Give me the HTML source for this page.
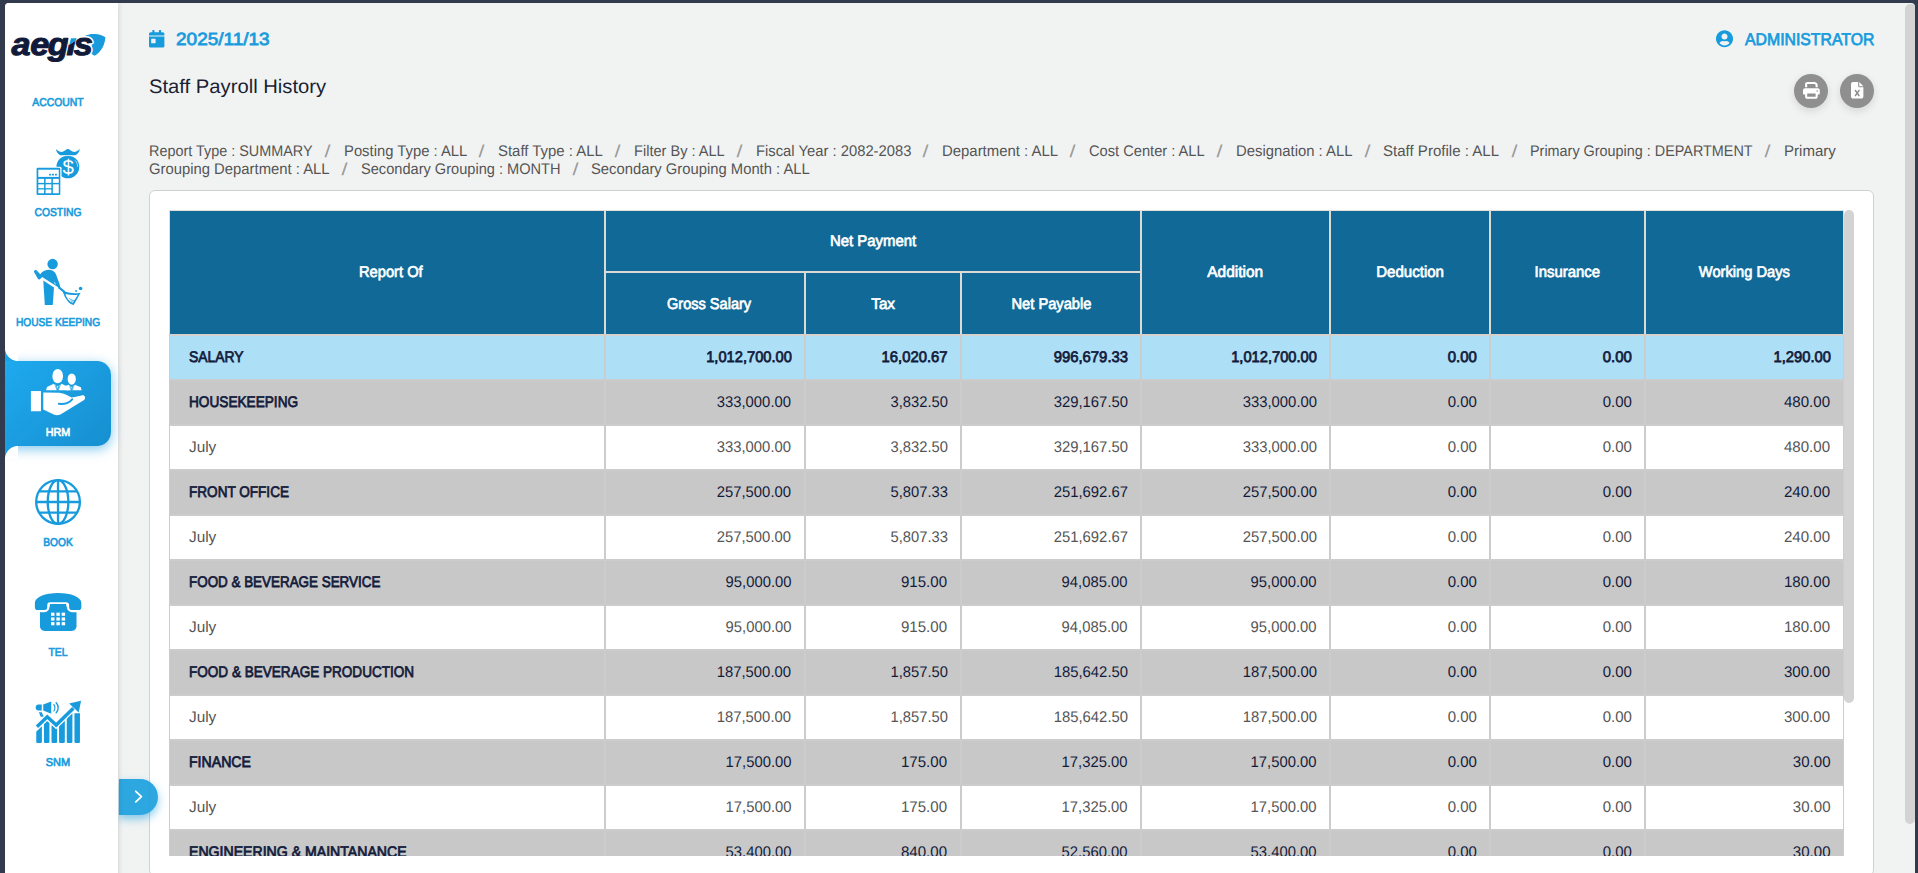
<!DOCTYPE html><html lang="en"><head><meta charset="utf-8"><title>Staff Payroll History</title><style>
*{box-sizing:border-box}
html,body{margin:0;padding:0}
body{width:1918px;height:873px;overflow:hidden;background:#323a4d;font-family:"Liberation Sans",sans-serif;position:relative;color:#555;text-rendering:geometricPrecision}
.app{position:absolute;left:5px;top:3px;width:1910px;height:880px;background:#f1f3f3;border-radius:4px 4px 0 0;overflow:hidden}
.abs{position:absolute;white-space:nowrap}
.side{position:absolute;left:0;top:0;width:113px;height:880px;background:#fff;box-shadow:1px 0 5px rgba(0,0,0,.13)}
.lbl{position:absolute;white-space:nowrap;font-size:11.4px;line-height:14px;color:#179bdd;-webkit-text-stroke:.65px #179bdd;transform:translateX(-50%)}
.lbl.on{color:#fff;-webkit-text-stroke:.65px #fff}
.tile{position:absolute;left:0;top:358px;width:106px;height:85px;border-radius:0 14px 14px 0;background:linear-gradient(135deg,#1ea9ee 0%,#168fd0 100%);box-shadow:0 3px 12px rgba(23,155,221,.55)}
.date{font-size:17.6px;color:#179bdd;-webkit-text-stroke:.75px #179bdd}
.adm{font-size:17px}
.title{font-size:19.6px;color:#1b1f33}
.crumb{font-size:15.4px;line-height:18px;color:#555}
.sep{color:#999}
.sep i{display:inline-block;font-style:normal;transform:translate(0.3px,0.6px) scale(1.4,1.13)}
.card{position:absolute;left:144px;top:187px;width:1725px;height:686px;background:#fff;border:1px solid #d0d0d0;border-radius:6px}
.scroll{position:absolute;left:20px;top:20px;width:1683px;height:644.5px;overflow:hidden}
table{border-collapse:separate;border-spacing:0;table-layout:fixed;width:1673px;font-size:15.4px}
td,th{padding:0;height:45px;border-top:2px solid #ccc;border-left:2px solid #ccc;overflow:hidden;white-space:nowrap}
td:first-child,th:first-child{border-left:0}
th{background:#106997;color:#fff;font-weight:normal;-webkit-text-stroke:.7px #fff;border-color:#ded9d5;text-align:center}
tr.h1 th{border-top:0;height:60px}
tr.h1 th[rowspan]{height:123px}
tr.h2 th{height:63px}
tr.h2 th:first-child{border-left:2px solid #ded9d5}
td{text-align:right;padding-right:12.5px;color:#555}
td:first-child{text-align:left;padding-left:19px;padding-right:0}
tr.tot td{background:#addff7;color:#131b3b;-webkit-text-stroke:.75px #131b3b;border-top-color:#d5d1ce}
tr.grp td{background:#c8c8c8;color:#131b3b}
tr.grp td:first-child{-webkit-text-stroke:.75px #131b3b}
tr.mon td{background:#fff}
td span{position:relative;top:0.9px}
th span{position:relative;top:1.3px}
tr.h2 th span{top:1px}
th[rowspan] span{top:0.5px}
th{font-size:15.6px}
.ln{position:absolute}
.vthumb{position:absolute;background:#d3d3d3;border-radius:5px}
.cc{position:absolute;left:0;width:13px;height:13px}
.btn{position:absolute;width:34px;height:34px;border-radius:50%;background:#8f8f8f;box-shadow:0 3px 8px rgba(0,0,0,.12)}
.tog{position:absolute;left:114px;top:776px;width:39px;height:36px;border-radius:0 18px 18px 0;background:rgba(30,160,222,.93);box-shadow:0 4px 9px rgba(23,155,221,.5)}
svg{position:absolute;overflow:visible}
</style></head><body>
<div class="app">
<svg style="left:144px;top:26.9px" width="15.4" height="17.6" viewBox="0 0 448 512"><path fill="#179bdd" d="M0 464c0 26.500 21.500 48 48 48h352c26.500 0 48-21.500 48-48V192H0v272zm64-192c0-8.800 7.200-16 16-16h96c8.800 0 16 7.200 16 16v96c0 8.800-7.200 16-16 16H80c-8.800 0-16-7.200-16-16v-96zM400 64h-48V16c0-8.800-7.200-16-16-16h-32c-8.800 0-16 7.200-16 16v48H160V16c0-8.800-7.200-16-16-16h-32c-8.800 0-16 7.200-16 16v48H48C21.500 64 0 85.500 0 112v48h448v-48c0-26.500-21.500-48-48-48z"/></svg>
<svg style="left:1710.8px;top:26.6px" width="17.05" height="17.6" viewBox="0 0 496 512"><path fill="#179bdd" d="M248 8C111 8 0 119 0 256s111 248 248 248 248-111 248-248S385 8 248 8zm0 96c48.600 0 88 39.400 88 88s-39.400 88-88 88-88-39.400-88-88 39.400-88 88-88zm0 344c-58.700 0-111.300-26.600-146.500-68.200 18.800-35.400 55.600-59.800 98.500-59.800 2.400 0 4.800.4 7.100 1.100 13 4.200 26.600 6.900 40.900 6.900 14.300 0 28-2.700 40.900-6.900 2.300-.7 4.700-1.100 7.100-1.100 42.900 0 79.700 24.400 98.500 59.800C359.300 421.400 306.700 448 248 448z"/></svg>

<div class="abs date" style="left:171.0px;top:25.5px"><span id="date" class="" style="display:inline-block;transform-origin:left center;transform:scaleX(1.0796)">2025/11/13</span></div>
<div class="abs date adm" style="left:1739.5px;top:27.2px"><span id="admin" class="" style="display:inline-block;transform-origin:left center;transform:scaleX(0.9299)">ADMINISTRATOR</span></div>
<div class="abs title" style="left:144.0px;top:73.0px"><span id="title" class="" style="display:inline-block;transform-origin:left center;transform:scaleX(1.0319)">Staff Payroll History</span></div>
<div class="abs crumb" style="left:144.0px;top:140.0px"><span id="t1" class="" style="display:inline-block;transform-origin:left center;transform:scaleX(0.9359)">Report Type : SUMMARY</span></div>
<div class="abs crumb sep" style="left:320.0px;top:140.0px"><i>/</i></div>
<div class="abs crumb" style="left:338.6px;top:140.0px"><span id="t2" class="" style="display:inline-block;transform-origin:left center;transform:scaleX(0.9626)">Posting Type : ALL</span></div>
<div class="abs crumb sep" style="left:474.3px;top:140.0px"><i>/</i></div>
<div class="abs crumb" style="left:492.9px;top:140.0px"><span id="t3" class="" style="display:inline-block;transform-origin:left center;transform:scaleX(0.9689)">Staff Type : ALL</span></div>
<div class="abs crumb sep" style="left:610.1px;top:140.0px"><i>/</i></div>
<div class="abs crumb" style="left:628.7px;top:140.0px"><span id="t4" class="" style="display:inline-block;transform-origin:left center;transform:scaleX(0.9468)">Filter By : ALL</span></div>
<div class="abs crumb sep" style="left:731.8px;top:140.0px"><i>/</i></div>
<div class="abs crumb" style="left:750.5px;top:140.0px"><span id="t5" class="" style="display:inline-block;transform-origin:left center;transform:scaleX(0.9612)">Fiscal Year : 2082-2083</span></div>
<div class="abs crumb sep" style="left:918.3px;top:140.0px"><i>/</i></div>
<div class="abs crumb" style="left:936.9px;top:140.0px"><span id="t6" class="" style="display:inline-block;transform-origin:left center;transform:scaleX(0.9689)">Department : ALL</span></div>
<div class="abs crumb sep" style="left:1065.4px;top:140.0px"><i>/</i></div>
<div class="abs crumb" style="left:1084.0px;top:140.0px"><span id="t7" class="" style="display:inline-block;transform-origin:left center;transform:scaleX(0.9520)">Cost Center : ALL</span></div>
<div class="abs crumb sep" style="left:1212.1px;top:140.0px"><i>/</i></div>
<div class="abs crumb" style="left:1230.7px;top:140.0px"><span id="t8" class="" style="display:inline-block;transform-origin:left center;transform:scaleX(0.9652)">Designation : ALL</span></div>
<div class="abs crumb sep" style="left:1359.6px;top:140.0px"><i>/</i></div>
<div class="abs crumb" style="left:1378.2px;top:140.0px"><span id="t9" class="" style="display:inline-block;transform-origin:left center;transform:scaleX(0.9778)">Staff Profile : ALL</span></div>
<div class="abs crumb sep" style="left:1506.7px;top:140.0px"><i>/</i></div>
<div class="abs crumb" style="left:1525.3px;top:140.0px"><span id="t10" class="" style="display:inline-block;transform-origin:left center;transform:scaleX(0.9353)">Primary Grouping : DEPARTMENT</span></div>
<div class="abs crumb sep" style="left:1760.4px;top:140.0px"><i>/</i></div>
<div class="abs crumb" style="left:1779.0px;top:140.0px"><span id="t11" class="" style="display:inline-block;transform-origin:left center;transform:scaleX(0.9774)">Primary</span></div>
<div class="abs crumb" style="left:144.0px;top:158.0px"><span id="t12" class="" style="display:inline-block;transform-origin:left center;transform:scaleX(0.9635)">Grouping Department : ALL</span></div>
<div class="abs crumb sep" style="left:337.0px;top:158.0px"><i>/</i></div>
<div class="abs crumb" style="left:355.6px;top:158.0px"><span id="t13" class="" style="display:inline-block;transform-origin:left center;transform:scaleX(0.9485)">Secondary Grouping : MONTH</span></div>
<div class="abs crumb sep" style="left:567.6px;top:158.0px"><i>/</i></div>
<div class="abs crumb" style="left:586.2px;top:158.0px"><span id="t14" class="" style="display:inline-block;transform-origin:left center;transform:scaleX(0.9614)">Secondary Grouping Month : ALL</span></div>
<div class="btn" style="left:1789px;top:71px"><svg style="left:8.6px;top:8px" width="16.8" height="16.8" viewBox="0 0 512 512"><path fill="#fff" d="M128 0C92.700 0 64 28.700 64 64v96h64V64H354.700L384 93.300V160h64V93.300c0-17-6.700-33.300-18.700-45.300L400 18.700C388 6.700 371.700 0 354.700 0H128zM384 352v32 64H128V384 368 352H384zm64 32h32c17.700 0 32-14.300 32-32V256c0-35.300-28.700-64-64-64H64c-35.300 0-64 28.700-64 64v96c0 17.700 14.300 32 32 32H64v64c0 35.300 28.700 64 64 64H384c35.300 0 64-28.700 64-64V384zM432 248a24 24 0 1 1 0 48 24 24 0 1 1 0-48z"/></svg>
</div>
<div class="btn" style="left:1835px;top:71px"><svg style="left:10.8px;top:8px" width="12.4" height="16.5" viewBox="0 0 384 512"><path fill="#fff" d="M64 0C28.700 0 0 28.700 0 64V448c0 35.300 28.700 64 64 64H320c35.300 0 64-28.700 64-64V160H256c-17.700 0-32-14.300-32-32V0H64zM256 0V128H384L256 0zM155.700 250.200L192 302.100l36.300-51.900c7.600-10.900 22.600-13.500 33.400-5.900s13.500 22.600 5.900 33.400L221.300 344l46.400 66.200c7.600 10.900 5 25.800-5.900 33.400s-25.800 5-33.400-5.900L192 385.800l-36.300 51.900c-7.600 10.900-22.600 13.500-33.400 5.900s-13.500-22.600-5.900-33.400L162.700 344l-46.400-66.200c-7.600-10.900-5-25.800 5.900-33.400s25.800-5 33.400 5.900z"/></svg>
</div>
<div class="card"><div class="scroll"><table>
<colgroup><col style="width:434px"><col style="width:200px"><col style="width:156px"><col style="width:180px"><col style="width:189px"><col style="width:160px"><col style="width:155px"><col style="width:199px"></colgroup>
<thead><tr class="h1"><th rowspan="2"><span id="t15" class="" style="left:3.8px;position:relative;display:inline-block;transform-origin:center center;transform:scaleX(0.9435)">Report Of</span></th><th colspan="3"><span id="t16" class="" style="display:inline-block;transform-origin:center center;transform:scaleX(0.9553)">Net Payment</span></th><th rowspan="2"><span id="t17" class="" style="display:inline-block;transform-origin:center center;transform:scaleX(0.9891)">Addition</span></th><th rowspan="2"><span id="t18" class="" style="display:inline-block;transform-origin:center center;transform:scaleX(0.9651)">Deduction</span></th><th rowspan="2"><span id="t19" class="" style="display:inline-block;transform-origin:center center;transform:scaleX(0.9552)">Insurance</span></th><th rowspan="2"><span id="t20" class="" style="display:inline-block;transform-origin:center center;transform:scaleX(0.9416)">Working Days</span></th></tr>
<tr class="h2"><th ><span id="t21" class="" style="left:3.7px;position:relative;display:inline-block;transform-origin:center center;transform:scaleX(0.9331)">Gross Salary</span></th><th ><span id="t22" class="" style="display:inline-block;transform-origin:center center;transform:scaleX(0.9777)">Tax</span></th><th ><span id="t23" class="" style="display:inline-block;transform-origin:center center;transform:scaleX(0.9404)">Net Payable</span></th></tr></thead><tbody>
<tr class="tot"><td><span id="t24" class="" style="display:inline-block;transform-origin:left center;transform:scaleX(0.9029)">SALARY</span></td><td><span id="t25" class="" style="display:inline-block;transform-origin:right center;transform:scaleX(0.9539)">1,012,700.00</span></td><td><span id="t26" class="" style="display:inline-block;transform-origin:right center;transform:scaleX(0.9625)">16,020.67</span></td><td><span id="t27" class="" style="display:inline-block;transform-origin:right center;transform:scaleX(0.9652)">996,679.33</span></td><td><span id="t28" class="" style="display:inline-block;transform-origin:right center;transform:scaleX(0.9539)">1,012,700.00</span></td><td><span id="t29" class="" style="display:inline-block;transform-origin:right center;transform:scaleX(0.9759)">0.00</span></td><td><span id="t30" class="" style="display:inline-block;transform-origin:right center;transform:scaleX(0.9759)">0.00</span></td><td><span id="t31" class="" style="display:inline-block;transform-origin:right center;transform:scaleX(0.9594)">1,290.00</span></td></tr>
<tr class="grp"><td><span id="t32" class="" style="display:inline-block;transform-origin:left center;transform:scaleX(0.8859)">HOUSEKEEPING</span></td><td><span id="t33" class="" style="display:inline-block;transform-origin:right center;transform:scaleX(0.9652)">333,000.00</span></td><td><span id="t34" class="" style="display:inline-block;transform-origin:right center;transform:scaleX(0.9594)">3,832.50</span></td><td><span id="t35" class="" style="display:inline-block;transform-origin:right center;transform:scaleX(0.9652)">329,167.50</span></td><td><span id="t36" class="" style="display:inline-block;transform-origin:right center;transform:scaleX(0.9652)">333,000.00</span></td><td><span id="t37" class="" style="display:inline-block;transform-origin:right center;transform:scaleX(0.9759)">0.00</span></td><td><span id="t38" class="" style="display:inline-block;transform-origin:right center;transform:scaleX(0.9759)">0.00</span></td><td><span id="t39" class="" style="display:inline-block;transform-origin:right center;transform:scaleX(0.9794)">480.00</span></td></tr>
<tr class="mon"><td><span id="t40" class="" style="display:inline-block;transform-origin:left center;transform:scaleX(0.9969)">July</span></td><td><span id="t41" class="" style="display:inline-block;transform-origin:right center;transform:scaleX(0.9652)">333,000.00</span></td><td><span id="t42" class="" style="display:inline-block;transform-origin:right center;transform:scaleX(0.9594)">3,832.50</span></td><td><span id="t43" class="" style="display:inline-block;transform-origin:right center;transform:scaleX(0.9652)">329,167.50</span></td><td><span id="t44" class="" style="display:inline-block;transform-origin:right center;transform:scaleX(0.9652)">333,000.00</span></td><td><span id="t45" class="" style="display:inline-block;transform-origin:right center;transform:scaleX(0.9759)">0.00</span></td><td><span id="t46" class="" style="display:inline-block;transform-origin:right center;transform:scaleX(0.9759)">0.00</span></td><td><span id="t47" class="" style="display:inline-block;transform-origin:right center;transform:scaleX(0.9794)">480.00</span></td></tr>
<tr class="grp"><td><span id="t48" class="" style="display:inline-block;transform-origin:left center;transform:scaleX(0.8815)">FRONT OFFICE</span></td><td><span id="t49" class="" style="display:inline-block;transform-origin:right center;transform:scaleX(0.9652)">257,500.00</span></td><td><span id="t50" class="" style="display:inline-block;transform-origin:right center;transform:scaleX(0.9594)">5,807.33</span></td><td><span id="t51" class="" style="display:inline-block;transform-origin:right center;transform:scaleX(0.9652)">251,692.67</span></td><td><span id="t52" class="" style="display:inline-block;transform-origin:right center;transform:scaleX(0.9652)">257,500.00</span></td><td><span id="t53" class="" style="display:inline-block;transform-origin:right center;transform:scaleX(0.9759)">0.00</span></td><td><span id="t54" class="" style="display:inline-block;transform-origin:right center;transform:scaleX(0.9759)">0.00</span></td><td><span id="t55" class="" style="display:inline-block;transform-origin:right center;transform:scaleX(0.9794)">240.00</span></td></tr>
<tr class="mon"><td><span id="t56" class="" style="display:inline-block;transform-origin:left center;transform:scaleX(0.9969)">July</span></td><td><span id="t57" class="" style="display:inline-block;transform-origin:right center;transform:scaleX(0.9652)">257,500.00</span></td><td><span id="t58" class="" style="display:inline-block;transform-origin:right center;transform:scaleX(0.9594)">5,807.33</span></td><td><span id="t59" class="" style="display:inline-block;transform-origin:right center;transform:scaleX(0.9652)">251,692.67</span></td><td><span id="t60" class="" style="display:inline-block;transform-origin:right center;transform:scaleX(0.9652)">257,500.00</span></td><td><span id="t61" class="" style="display:inline-block;transform-origin:right center;transform:scaleX(0.9759)">0.00</span></td><td><span id="t62" class="" style="display:inline-block;transform-origin:right center;transform:scaleX(0.9759)">0.00</span></td><td><span id="t63" class="" style="display:inline-block;transform-origin:right center;transform:scaleX(0.9794)">240.00</span></td></tr>
<tr class="grp"><td><span id="t64" class="" style="display:inline-block;transform-origin:left center;transform:scaleX(0.8717)">FOOD &amp; BEVERAGE SERVICE</span></td><td><span id="t65" class="" style="display:inline-block;transform-origin:right center;transform:scaleX(0.9625)">95,000.00</span></td><td><span id="t66" class="" style="display:inline-block;transform-origin:right center;transform:scaleX(0.9794)">915.00</span></td><td><span id="t67" class="" style="display:inline-block;transform-origin:right center;transform:scaleX(0.9625)">94,085.00</span></td><td><span id="t68" class="" style="display:inline-block;transform-origin:right center;transform:scaleX(0.9625)">95,000.00</span></td><td><span id="t69" class="" style="display:inline-block;transform-origin:right center;transform:scaleX(0.9759)">0.00</span></td><td><span id="t70" class="" style="display:inline-block;transform-origin:right center;transform:scaleX(0.9759)">0.00</span></td><td><span id="t71" class="" style="display:inline-block;transform-origin:right center;transform:scaleX(0.9794)">180.00</span></td></tr>
<tr class="mon"><td><span id="t72" class="" style="display:inline-block;transform-origin:left center;transform:scaleX(0.9969)">July</span></td><td><span id="t73" class="" style="display:inline-block;transform-origin:right center;transform:scaleX(0.9625)">95,000.00</span></td><td><span id="t74" class="" style="display:inline-block;transform-origin:right center;transform:scaleX(0.9794)">915.00</span></td><td><span id="t75" class="" style="display:inline-block;transform-origin:right center;transform:scaleX(0.9625)">94,085.00</span></td><td><span id="t76" class="" style="display:inline-block;transform-origin:right center;transform:scaleX(0.9625)">95,000.00</span></td><td><span id="t77" class="" style="display:inline-block;transform-origin:right center;transform:scaleX(0.9759)">0.00</span></td><td><span id="t78" class="" style="display:inline-block;transform-origin:right center;transform:scaleX(0.9759)">0.00</span></td><td><span id="t79" class="" style="display:inline-block;transform-origin:right center;transform:scaleX(0.9794)">180.00</span></td></tr>
<tr class="grp"><td><span id="t80" class="" style="display:inline-block;transform-origin:left center;transform:scaleX(0.8803)">FOOD &amp; BEVERAGE PRODUCTION</span></td><td><span id="t81" class="" style="display:inline-block;transform-origin:right center;transform:scaleX(0.9652)">187,500.00</span></td><td><span id="t82" class="" style="display:inline-block;transform-origin:right center;transform:scaleX(0.9594)">1,857.50</span></td><td><span id="t83" class="" style="display:inline-block;transform-origin:right center;transform:scaleX(0.9652)">185,642.50</span></td><td><span id="t84" class="" style="display:inline-block;transform-origin:right center;transform:scaleX(0.9652)">187,500.00</span></td><td><span id="t85" class="" style="display:inline-block;transform-origin:right center;transform:scaleX(0.9759)">0.00</span></td><td><span id="t86" class="" style="display:inline-block;transform-origin:right center;transform:scaleX(0.9759)">0.00</span></td><td><span id="t87" class="" style="display:inline-block;transform-origin:right center;transform:scaleX(0.9794)">300.00</span></td></tr>
<tr class="mon"><td><span id="t88" class="" style="display:inline-block;transform-origin:left center;transform:scaleX(0.9969)">July</span></td><td><span id="t89" class="" style="display:inline-block;transform-origin:right center;transform:scaleX(0.9652)">187,500.00</span></td><td><span id="t90" class="" style="display:inline-block;transform-origin:right center;transform:scaleX(0.9594)">1,857.50</span></td><td><span id="t91" class="" style="display:inline-block;transform-origin:right center;transform:scaleX(0.9652)">185,642.50</span></td><td><span id="t92" class="" style="display:inline-block;transform-origin:right center;transform:scaleX(0.9652)">187,500.00</span></td><td><span id="t93" class="" style="display:inline-block;transform-origin:right center;transform:scaleX(0.9759)">0.00</span></td><td><span id="t94" class="" style="display:inline-block;transform-origin:right center;transform:scaleX(0.9759)">0.00</span></td><td><span id="t95" class="" style="display:inline-block;transform-origin:right center;transform:scaleX(0.9794)">300.00</span></td></tr>
<tr class="grp"><td><span id="t96" class="" style="display:inline-block;transform-origin:left center;transform:scaleX(0.9173)">FINANCE</span></td><td><span id="t97" class="" style="display:inline-block;transform-origin:right center;transform:scaleX(0.9625)">17,500.00</span></td><td><span id="t98" class="" style="display:inline-block;transform-origin:right center;transform:scaleX(0.9794)">175.00</span></td><td><span id="t99" class="" style="display:inline-block;transform-origin:right center;transform:scaleX(0.9625)">17,325.00</span></td><td><span id="t100" class="" style="display:inline-block;transform-origin:right center;transform:scaleX(0.9625)">17,500.00</span></td><td><span id="t101" class="" style="display:inline-block;transform-origin:right center;transform:scaleX(0.9759)">0.00</span></td><td><span id="t102" class="" style="display:inline-block;transform-origin:right center;transform:scaleX(0.9759)">0.00</span></td><td><span id="t103" class="" style="display:inline-block;transform-origin:right center;transform:scaleX(0.9782)">30.00</span></td></tr>
<tr class="mon"><td><span id="t104" class="" style="display:inline-block;transform-origin:left center;transform:scaleX(0.9969)">July</span></td><td><span id="t105" class="" style="display:inline-block;transform-origin:right center;transform:scaleX(0.9625)">17,500.00</span></td><td><span id="t106" class="" style="display:inline-block;transform-origin:right center;transform:scaleX(0.9794)">175.00</span></td><td><span id="t107" class="" style="display:inline-block;transform-origin:right center;transform:scaleX(0.9625)">17,325.00</span></td><td><span id="t108" class="" style="display:inline-block;transform-origin:right center;transform:scaleX(0.9625)">17,500.00</span></td><td><span id="t109" class="" style="display:inline-block;transform-origin:right center;transform:scaleX(0.9759)">0.00</span></td><td><span id="t110" class="" style="display:inline-block;transform-origin:right center;transform:scaleX(0.9759)">0.00</span></td><td><span id="t111" class="" style="display:inline-block;transform-origin:right center;transform:scaleX(0.9782)">30.00</span></td></tr>
<tr class="grp"><td><span id="t112" class="" style="display:inline-block;transform-origin:left center;transform:scaleX(0.9165)">ENGINEERING &amp; MAINTANANCE</span></td><td><span id="t113" class="" style="display:inline-block;transform-origin:right center;transform:scaleX(0.9625)">53,400.00</span></td><td><span id="t114" class="" style="display:inline-block;transform-origin:right center;transform:scaleX(0.9794)">840.00</span></td><td><span id="t115" class="" style="display:inline-block;transform-origin:right center;transform:scaleX(0.9625)">52,560.00</span></td><td><span id="t116" class="" style="display:inline-block;transform-origin:right center;transform:scaleX(0.9625)">53,400.00</span></td><td><span id="t117" class="" style="display:inline-block;transform-origin:right center;transform:scaleX(0.9759)">0.00</span></td><td><span id="t118" class="" style="display:inline-block;transform-origin:right center;transform:scaleX(0.9759)">0.00</span></td><td><span id="t119" class="" style="display:inline-block;transform-origin:right center;transform:scaleX(0.9782)">30.00</span></td></tr>
<tr class="mon"><td><span id="t120" class="" style="display:inline-block;transform-origin:left center;transform:scaleX(0.9969)">July</span></td><td><span id="t121" class="" style="display:inline-block;transform-origin:right center;transform:scaleX(0.9625)">53,400.00</span></td><td><span id="t122" class="" style="display:inline-block;transform-origin:right center;transform:scaleX(0.9794)">840.00</span></td><td><span id="t123" class="" style="display:inline-block;transform-origin:right center;transform:scaleX(0.9625)">52,560.00</span></td><td><span id="t124" class="" style="display:inline-block;transform-origin:right center;transform:scaleX(0.9625)">53,400.00</span></td><td><span id="t125" class="" style="display:inline-block;transform-origin:right center;transform:scaleX(0.9759)">0.00</span></td><td><span id="t126" class="" style="display:inline-block;transform-origin:right center;transform:scaleX(0.9759)">0.00</span></td><td><span id="t127" class="" style="display:inline-block;transform-origin:right center;transform:scaleX(0.9782)">30.00</span></td></tr>
</tbody></table></div>
<div class="vthumb" style="left:1694.2px;top:19px;width:9.7px;height:493px"></div>
<div class="ln" style="left:19px;top:19px;width:1px;height:645.5px;background:linear-gradient(#e4deda 0,#e4deda 124px,#ccc 124px)"></div>
<div class="ln" style="left:19px;top:19px;width:1675px;height:1px;background:#e4deda"></div>
<div class="ln" style="left:1693px;top:19px;width:1px;height:645.5px;background:linear-gradient(#e4deda 0,#e4deda 124px,#ccc 124px)"></div>
</div>
<div class="vthumb" style="left:1900.3px;top:0.5px;width:9.7px;height:820px;border-radius:5px 3px 5px 5px"></div>
<div class="tog"><svg style="left:0;top:0" width="39" height="36" viewBox="0 0 39 36"><path d="M16.8 12.3 L22.4 17.6 L16.8 22.9" fill="none" stroke="#fff" stroke-width="1.8" stroke-linecap="round" stroke-linejoin="round"/></svg>
</div>
<div class="side">
<div class="tile"></div><div class="cc" style="top:345px;background:radial-gradient(circle at 100% 0,#fff 12.6px,#15a4ec 13.4px)"></div><div class="cc" style="top:443px;background:radial-gradient(circle at 100% 100%,#fff 12.6px,#17a0e6 13.4px)"></div>
<svg style="left:-5.0px;top:-3.0px" width="160" height="73" viewBox="0 0 1913 873">
<path fill="#179bdd" d="M1007,435 C1050,410 1090,405 1137,406 C1185,408 1225,425 1260,444 C1255,530 1215,615 1130,668 L1087,641 C1100,610 1104,575 1098,545 C1094,515 1080,470 1007,435 Z"/>
<g font-family="'Liberation Sans',sans-serif" font-weight="bold" font-style="italic" font-size="377" stroke-linejoin="round">
<text transform="scale(1.09,1)" x="125.7 333.0 524.8 728.4 810.1" y="663" fill="#fff" stroke="#fff" stroke-width="46">aegis</text>
<text transform="scale(1.09,1)" x="125.7 333.0 524.8 728.4 810.1" y="663" fill="#111a3a" stroke="#111a3a" stroke-width="13">aegis</text>
</g>
<path fill="#fff" d="M826,330 L960,330 L960,450 L918,450 L909,481 L828,534 L818,534 Z"/>
<path fill="#179bdd" d="M849,457 L916,457 L909,481 L828,534 Z"/>
</svg>
<svg style="left:23.0px;top:137.0px" width="60" height="60" viewBox="0 0 873 873">
<path fill="#179bdd" d="M405,130 C440,165 480,180 505,172 C535,160 555,130 580,130 C605,130 625,160 655,172 C680,180 720,165 755,130 C745,175 720,205 690,222 L470,222 C440,205 415,175 405,130 Z"/>
<circle cx="580" cy="392" r="166" fill="#179bdd"/>
<path d="M455,262 C520,215 640,215 700,262" fill="none" stroke="#fff" stroke-width="9"/>
<path d="M690,300 C712,325 722,355 722,385" fill="none" stroke="#fff" stroke-width="9" stroke-linecap="round"/>
<text x="585" y="490" text-anchor="middle" font-family="'Liberation Sans',sans-serif" font-size="300" fill="#fff">$</text>
<rect x="108" y="388" width="380" height="430" rx="22" fill="#fff"/>
<rect x="125" y="405" width="345" height="395" rx="16" fill="#179bdd"/>
<rect x="150" y="432" width="298" height="105" fill="#fff"/>
<rect x="308" y="492" width="28" height="24" fill="#179bdd"/><rect x="350" y="492" width="28" height="24" fill="#179bdd"/><rect x="392" y="492" width="28" height="24" fill="#179bdd"/>
<rect x="150" y="566" width="84" height="58" fill="#fff"/><rect x="256" y="566" width="84" height="58" fill="#fff"/><rect x="362" y="566" width="86" height="58" fill="#fff"/>
<rect x="150" y="645" width="84" height="56" fill="#fff"/><rect x="256" y="645" width="84" height="56" fill="#fff"/><rect x="362" y="645" width="86" height="130" fill="#fff"/>
<rect x="150" y="720" width="84" height="55" fill="#fff"/><rect x="256" y="720" width="84" height="55" fill="#fff"/>
</svg>
<svg style="left:23.0px;top:247.0px" width="60" height="60" viewBox="0 0 873 873">
<circle cx="358" cy="205" r="76" fill="#179bdd"/>
<path fill="#179bdd" d="M90,322 C80,302 100,282 124,294 L178,352 C215,302 260,288 310,288 C360,288 395,320 410,360 L462,505 C468,525 470,545 468,560 L205,392 L182,420 C170,436 150,432 142,416 Z"/>
<path fill="#179bdd" d="M222,444 L378,546 L360,800 L245,800 Z"/>
<path d="M452,548 L522,602" stroke="#179bdd" stroke-width="30" fill="none" stroke-linecap="round"/>
<path fill="#179bdd" d="M500,585 C570,625 680,640 765,622 L665,800 C600,790 540,720 500,585 Z"/>
<path fill="#fff" d="M545,640 C600,655 670,660 725,650 L650,770 C600,750 560,700 545,640 Z"/>
<path d="M600,705 C625,725 650,735 680,738" stroke="#179bdd" stroke-width="12" fill="none"/>
<path d="M620,735 C635,750 650,758 668,762" stroke="#179bdd" stroke-width="10" fill="none"/>
<circle cx="765" cy="560" r="26" fill="#179bdd"/><circle cx="700" cy="597" r="14" fill="#179bdd"/>
<path d="M385,462 L392,495 L405,495" stroke="#fff" stroke-width="8" fill="none"/>
</svg>
<svg style="left:-5.0px;top:342.0px" width="130" height="120" viewBox="0 0 946 873">
<g fill="#fff">
<rect x="225" y="335" width="73" height="147"/>
<path d="M315,345 L430,348 C470,352 500,372 520,382 C555,380 585,368 600,366 C620,366 626,386 612,400 L440,505 C425,512 405,512 395,508 L315,470 Z"/>
<ellipse cx="420" cy="226" rx="39" ry="52"/>
<path d="M335,330 L342,305 L392,282 L420,300 L448,282 L498,305 L505,330 Z"/>
<ellipse cx="522" cy="248" rx="30" ry="41"/>
<path d="M478,330 L470,300 L500,290 L522,305 L545,290 L588,308 L594,330 Z"/>
</g>
<path d="M428,428 C470,432 505,420 525,395" stroke="#1a9de2" stroke-width="14" fill="none" stroke-linecap="round"/>
<path d="M410,292 L420,330 L430,292" stroke="#1a9de2" stroke-width="7" fill="none"/>
<path d="M398,284 L416,330 M442,284 L424,330" stroke="#1a9de2" stroke-width="5" fill="none"/>
<path d="M514,298 L522,330 L530,298" stroke="#1a9de2" stroke-width="6" fill="none"/>
<path d="M505,292 L518,330 M540,292 L527,330" stroke="#1a9de2" stroke-width="4" fill="none"/>
</svg>
<svg style="left:23.0px;top:467.0px" width="60" height="60" viewBox="0 0 873 873">
<g fill="none" stroke="#179bdd" stroke-width="34">
<circle cx="437" cy="465" r="318"/>
<ellipse cx="437" cy="465" rx="150" ry="318"/>
<path d="M437,147 V783 M119,465 H755 M165,310 H709 M165,620 H709"/>
</g>
</svg>
<svg style="left:23.0px;top:577.0px" width="60" height="60" viewBox="0 0 873 873">
<path fill="#179bdd" d="M100,335 C100,250 250,190 438,190 C626,190 776,250 776,335 L776,395 C776,420 760,437 740,437 L632,437 C610,437 598,420 598,398 L598,365 C598,340 585,322 555,322 L320,322 C292,322 280,340 280,365 L280,398 C280,420 268,437 245,437 L136,437 C116,437 100,420 100,395 Z"/>
<path fill="#179bdd" d="M322,350 L552,350 L566,400 C572,440 600,468 640,468 L706,468 L706,670 C706,712 676,742 634,742 L246,742 C204,742 174,712 174,670 L174,468 L240,468 C280,468 306,440 312,400 Z"/>
<g fill="#fff">
<rect x="335" y="475" width="50" height="46"/><rect x="413" y="475" width="50" height="46"/><rect x="490" y="475" width="50" height="46"/>
<rect x="335" y="545" width="50" height="46"/><rect x="413" y="545" width="50" height="46"/><rect x="490" y="545" width="50" height="46"/>
<rect x="335" y="613" width="50" height="46"/><rect x="413" y="613" width="50" height="46"/><rect x="490" y="613" width="50" height="46"/>
</g>
</svg>
<svg style="left:23.0px;top:687.0px" width="60" height="60" viewBox="0 0 873 873"><path fill="#179bdd" d="M120,752 L120,607 L130,597 L140,587 L151,577 L161,567 L171,557 L182,547 L192,537 L202,527 L202,752 Q202,772 184,772 L138,772 Q120,772 120,752 Z"/><path fill="#179bdd" d="M232,752 L232,498 L242,489 L252,479 L262,469 L272,460 L282,454 L292,463 L302,472 L312,482 L312,752 Q312,772 294,772 L250,772 Q232,772 232,752 Z"/><path fill="#179bdd" d="M342,752 L342,509 L352,519 L362,528 L373,538 L383,547 L393,557 L404,566 L414,568 L424,558 L424,752 Q424,772 406,772 L360,772 Q342,772 342,752 Z"/><path fill="#179bdd" d="M452,752 L452,531 L462,520 L473,510 L484,500 L494,490 L504,479 L515,469 L526,459 L536,448 L536,752 Q536,772 518,772 L470,772 Q452,772 452,752 Z"/><path fill="#179bdd" d="M564,752 L564,421 L574,411 L584,401 L595,391 L605,381 L615,371 L626,360 L636,350 L646,340 L646,752 Q646,772 628,772 L582,772 Q564,772 564,752 Z"/><path fill="#179bdd" d="M676,752 L676,338 L686,338 L696,338 L706,338 L716,338 L726,338 L736,338 L746,338 L756,338 L756,752 Q756,772 738,772 L694,772 Q676,772 676,752 Z"/>
<path d="M130,535 L280,390 L410,510 L660,265" fill="none" stroke="#179bdd" stroke-width="50"/>
<path fill="#179bdd" d="M598,198 L772,158 L738,328 Z"/>
<path fill="#179bdd" d="M150,212 L200,212 L200,300 L150,300 C128,300 112,282 112,256 C112,230 128,212 150,212 Z"/>
<path fill="#179bdd" d="M222,212 L338,168 L338,346 L222,300 Z"/>
<path fill="#179bdd" d="M158,322 L200,322 L228,388 L186,388 Z"/>
<path d="M372,205 C395,235 395,280 372,310" fill="none" stroke="#179bdd" stroke-width="16"/>
<path d="M405,178 C450,225 450,295 405,340" fill="none" stroke="#179bdd" stroke-width="20"/>
</svg>

<div class="lbl" style="left:53.1px;top:92.9px"><span id="t128" class="" style="display:inline-block;transform-origin:center center;transform:scaleX(0.9109)">ACCOUNT</span></div>
<div class="lbl" style="left:53.1px;top:202.9px"><span id="t129" class="" style="display:inline-block;transform-origin:center center;transform:scaleX(0.9053)">COSTING</span></div>
<div class="lbl" style="left:53.1px;top:312.9px"><span id="t130" class="" style="display:inline-block;transform-origin:center center;transform:scaleX(0.8932)">HOUSE KEEPING</span></div>
<div class="lbl on" style="left:53.1px;top:422.9px"><span id="t131" class="" style="display:inline-block;transform-origin:center center;transform:scaleX(0.9505)">HRM</span></div>
<div class="lbl" style="left:53.1px;top:532.9px"><span id="t132" class="" style="display:inline-block;transform-origin:center center;transform:scaleX(0.8935)">BOOK</span></div>
<div class="lbl" style="left:53.1px;top:642.9px"><span id="t133" class="" style="display:inline-block;transform-origin:center center;transform:scaleX(0.9134)">TEL</span></div>
<div class="lbl" style="left:53.1px;top:752.9px"><span id="t134" class="" style="display:inline-block;transform-origin:center center;transform:scaleX(0.9647)">SNM</span></div>
</div>
</div></body></html>
